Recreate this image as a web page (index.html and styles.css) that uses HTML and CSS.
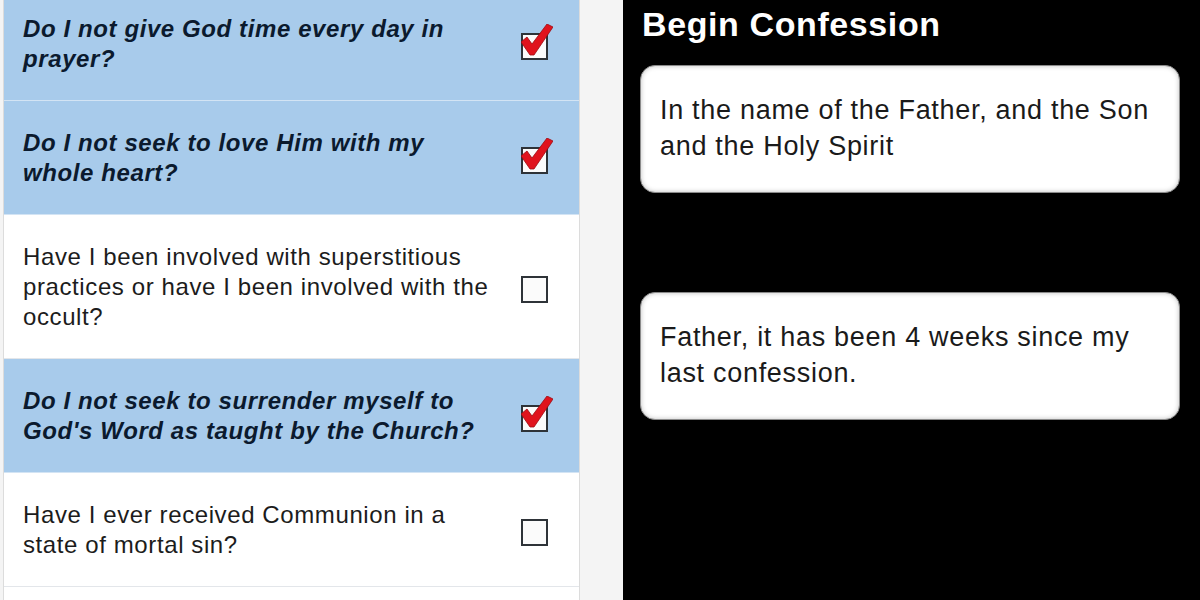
FILE: index.html
```html
<!DOCTYPE html>
<html lang="en">
<head>
    <meta charset="UTF-8">
    <meta name="viewport" content="width=device-width, initial-scale=1.0">
    <title>Examination of Conscience</title>
    <link rel="stylesheet" href="styles.css">
</head>
<body>
    <div class="screen">
        <ul class="questions">
            <li class="question checked">
                <span class="text">Do I not give God time every day in prayer?</span>
                <svg class="box" viewBox="0 0 32 36" width="32" height="36"><rect x="1" y="10" width="25" height="25" /><path class="tick" d="M0 18 L6 13 L11 20 L26 0 L32 3 L13 31 L9 31 Z" /></svg>
            </li>
            <li class="question checked">
                <span class="text">Do I not seek to love Him with my whole heart?</span>
                <svg class="box" viewBox="0 0 32 36" width="32" height="36"><rect x="1" y="10" width="25" height="25" /><path class="tick" d="M0 18 L6 13 L11 20 L26 0 L32 3 L13 31 L9 31 Z" /></svg>
            </li>
            <li class="question">
                <span class="text">Have I been involved with superstitious practices or have I been involved with the occult?</span>
                <svg class="box" viewBox="0 0 32 36" width="32" height="36"><rect x="1" y="10" width="25" height="25" /></svg>
            </li>
            <li class="question checked">
                <span class="text">Do I not seek to surrender myself to God's Word as taught by the Church?</span>
                <svg class="box" viewBox="0 0 32 36" width="32" height="36"><rect x="1" y="10" width="25" height="25" /><path class="tick" d="M0 18 L6 13 L11 20 L26 0 L32 3 L13 31 L9 31 Z" /></svg>
            </li>
            <li class="question">
                <span class="text">Have I ever received Communion in a state of mortal sin?</span>
                <svg class="box" viewBox="0 0 32 36" width="32" height="36"><rect x="1" y="10" width="25" height="25" /></svg>
            </li>
        </ul>

        <div class="confession">
            <h2>Begin Confession</h2>
            <div class="card">In the name of the Father, and the Son and the Holy Spirit</div>
            <div class="card">Father, it has been 4 weeks since my last confession.</div>
        </div>
    </div>
</body>
</html>
```

FILE: styles.css
```css
html, body {
    margin: 0;
    height: 600px;
    overflow: hidden;
}
body {
    font-family: "Liberation Sans", Arial, sans-serif;
    background-color: #f4f4f4;
}
.screen {
    display: grid;
    grid-template-columns: 577px 1fr;
    column-gap: 43px;
    padding-left: 3px;
    height: 600px;
}
.questions {
    list-style: none;
    margin: -14px 0 0 0;
    padding: 0;
    border: 1px solid #dcdcdc;
    border-bottom: none;
    background: white;
}
.question {
    display: flex;
    align-items: center;
    gap: 20px;
    padding: 27px 26px 26px 19px;
    border-bottom: 1px solid #e3e6ea;
    font-size: 24px;
    line-height: 30px;
    letter-spacing: 0.6px;
    color: #1c1c1c;
}
.question.checked {
    background: #a8cbeb;
    border-bottom-color: #d3e4f4;
    color: #0b1a2e;
    font-weight: bold;
    font-style: italic;
}
.text {
    flex: 1;
}
.box {
    flex-shrink: 0;
    margin-top: -4px;
}
.box rect {
    fill: #fbfbfb;
    stroke: #2e3338;
    stroke-width: 2;
}
.tick {
    fill: #e0131d;
    stroke: #9c0b12;
    stroke-width: 0.8;
}
.confession {
    background: black;
    padding: 4px 20px 0 17px;
}
.confession h2 {
    margin: 0 0 21px 2px;
    color: white;
    font-size: 34px;
    line-height: 40px;
    letter-spacing: 0.6px;
}
.card {
    background: white;
    border: 1px solid #8a8a8a;
    border-radius: 15px;
    box-shadow: inset 0 0 5px rgba(0, 0, 0, 0.25);
    padding: 26px 20px 28px 19px;
    margin-bottom: 99px;
    font-size: 27px;
    line-height: 36px;
    letter-spacing: 0.7px;
    color: #1a1a1a;
}
```
